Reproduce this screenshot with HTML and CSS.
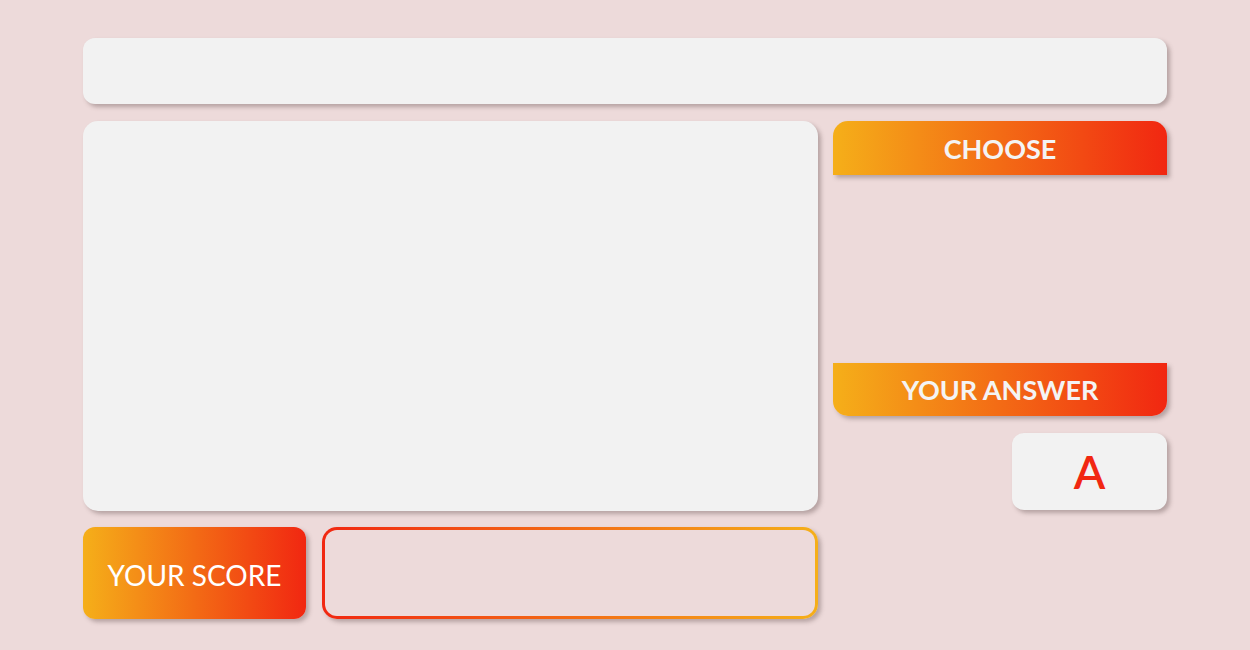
FILE: index.html
```html
<!DOCTYPE html>
<html lang="en">
<head>
<meta charset="utf-8">
<title>Quiz</title>
<link rel="stylesheet" href="styles.css">
</head>
<body>
<div class="app">
  <div class="topbar"></div>
  <div class="board"></div>
  <div class="side">
    <div class="label label-top">CHOOSE</div>
    <div class="choices"></div>
    <div class="label label-bottom">YOUR ANSWER</div>
    <div class="answer">A</div>
  </div>
  <div class="score-row">
    <div class="score-label">YOUR SCORE</div>
    <div class="score-box"></div>
  </div>
</div>
</body>
</html>
```
FILE: styles.css
```css
html, body {
  margin: 0;
  padding: 0;
}
body {
  background: #eddada;
  font-family: Lato, "Noto Sans", sans-serif;
  width: 1250px;
  height: 650px;
  overflow: hidden;
}
.app {
  box-sizing: border-box;
  width: 1084px;
  margin: 38px auto 0;
  display: grid;
  grid-template-columns: 735px 334px;
  grid-template-rows: 67px 390px 92px;
  column-gap: 15px;
  row-gap: 16px;
}
.topbar {
  grid-column: 1 / 3;
  margin-bottom: 1px;
  background: #f2f2f2;
  border-radius: 12px;
  box-shadow: 3px 3px 4px rgba(80, 60, 60, 0.35);
}
.board {
  background: #f2f2f2;
  border-radius: 15px;
  box-shadow: 3px 3px 4px rgba(80, 60, 60, 0.35);
}
.side {
  grid-row: 2 / 4;
  grid-column: 2;
  display: flex;
  flex-direction: column;
}
.label {
  background: linear-gradient(to right, #f5af19, #f12711);
  color: #f4f4f4;
  font-weight: 700;
  font-size: 27px;
  display: flex;
  align-items: center;
  justify-content: center;
  box-shadow: 3px 3px 4px rgba(80, 60, 60, 0.35);
}
.label-top {
  height: 54px;
  border-radius: 15px 15px 0 0;
}
.choices {
  height: 188px;
}
.label-bottom {
  height: 53px;
  border-radius: 0 0 15px 15px;
}
.answer {
  margin-top: 17px;
  align-self: flex-end;
  width: 155px;
  height: 77px;
  background: #f2f2f2;
  border-radius: 12px;
  box-shadow: 3px 3px 4px rgba(80, 60, 60, 0.35);
  color: #f12711;
  font-size: 46px;
  font-weight: 600;
  display: flex;
  align-items: center;
  justify-content: center;
}
.score-row {
  grid-row: 3;
  grid-column: 1;
  display: flex;
  gap: 16px;
}
.score-label {
  box-sizing: border-box;
  width: 223px;
  padding-top: 4px;
  background: linear-gradient(to right, #f5af19, #f12711);
  border-radius: 12px;
  color: #ffffff;
  font-size: 28px;
  display: flex;
  align-items: center;
  justify-content: center;
  box-shadow: 3px 3px 4px rgba(80, 60, 60, 0.35);
}
.score-box {
  flex: 1;
  border: 3px solid transparent;
  border-radius: 15px;
  background:
    linear-gradient(#eddada, #eddada) padding-box,
    linear-gradient(to right, #f12711, #f5af19) border-box;
  box-shadow: 3px 3px 4px rgba(80, 60, 60, 0.35);
}
```
